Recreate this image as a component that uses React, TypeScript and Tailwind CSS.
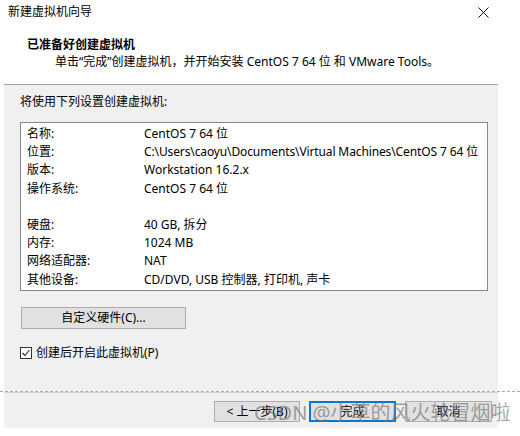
const rows: [string, string][] = [
  ["名称:", "CentOS 7 64 位"],
  ["位置:", "C:\\Users\\caoyu\\Documents\\Virtual Machines\\CentOS 7 64 位"],
  ["版本:", "Workstation 16.2.x"],
  ["操作系统:", "CentOS 7 64 位"],
  ["", ""],
  ["硬盘:", "40 GB, 拆分"],
  ["内存:", "1024 MB"],
  ["网络适配器:", "NAT"],
  ["其他设备:", "CD/DVD, USB 控制器, 打印机, 声卡"],
];

const App = () => {
  return (
    <div className="relative w-[520px] h-[436px] bg-white text-[12px] text-black font-['Noto_Sans','Noto_Sans_CJK_SC',sans-serif] overflow-hidden">
      {/* title bar */}
      <div className="h-[24px] flex items-center justify-between pl-[8px] pr-[31px]">
        <span className="leading-[16px]">新建虚拟机向导</span>
        <svg width="11" height="11" viewBox="0 0 11 11" className="text-[#111]">
          <path d="M0.5 0.5 L10.5 10.5 M10.5 0.5 L0.5 10.5" stroke="currentColor" strokeWidth="1" fill="none" />
        </svg>
      </div>

      {/* header */}
      <div className="h-[60px] pl-[27px] pt-[12px]">
        <div className="font-bold leading-[17px]">已准备好创建虚拟机</div>
        <div className="pl-[28px] leading-[17px]">
          单击“完成”创建虚拟机，并开始安装 CentOS 7 64 位 和 VMware Tools。
        </div>
      </div>

      <div className="mx-[4px] w-[494px] border-t border-[#a0a0a0]" />

      {/* body */}
      <div className="mx-[4px] w-[494px] h-[306px] bg-[#f0f0f0] pl-[16px] pr-[10px] pt-[8px]">
        <div className="leading-[18px]">将使用下列设置创建虚拟机:</div>
        <div className="mt-[11px] bg-white border border-[#828790] pl-[6px] pt-[2px] pb-[1px]">
          {rows.map(([label, value], i) => (
            <div key={i} className="flex h-[18.2px] leading-[18.2px] whitespace-nowrap">
              <span className="w-[117px] shrink-0">{label}</span>
              <span className={i === 1 ? "tracking-[-0.12px]" : ""}>{value}</span>
            </div>
          ))}
        </div>
        <button className="mt-[16px] ml-[1px] w-[165px] h-[22px] bg-[#e1e1e1] border border-[#adadad] leading-[18px]">
          自定义硬件(C)...
        </button>
        <label className="mt-[15px] flex items-center gap-[4px] leading-[18px]">
          <span className="w-[12px] h-[12px] border border-[#333] bg-white flex items-center justify-center">
            <svg width="10" height="10" viewBox="0 0 10 10">
              <path d="M1.5 5 L4 7.5 L8.5 2" stroke="#222" strokeWidth="1.1" fill="none" />
            </svg>
          </span>
          创建后开启此虚拟机(P)
        </label>
      </div>

      {/* separator */}
      <div className="border-t border-dashed border-[#a8a8a8]" />
      <div className="mx-[4px] w-[494px] border-t border-[#d4d4d4]" />

      {/* footer */}
      <div className="mx-[4px] w-[494px] h-[35px] bg-[#f0f0f0] flex justify-end items-start gap-[9px] pt-[8px] pr-[6px]">
        <button className="w-[86px] h-[21px] bg-[#e1e1e1] border border-[#adadad] leading-[18px]">
          &lt; 上一步(B)
        </button>
        <button className="w-[87px] h-[21px] bg-[#e1e1e1] border-2 border-[#0078d7] leading-[16px]">
          完成
        </button>
        <button className="w-[87px] h-[21px] bg-[#e1e1e1] border border-[#adadad] leading-[18px]">
          取消
        </button>
      </div>

      {/* watermark */}
      <div className="absolute left-[254px] top-[400px] text-[20px] leading-[26px] text-[#7a7a7a]/70 whitespace-nowrap pointer-events-none">
        CSDN @小草的风火轮冒烟啦
      </div>
    </div>
  );
};

export default App;
